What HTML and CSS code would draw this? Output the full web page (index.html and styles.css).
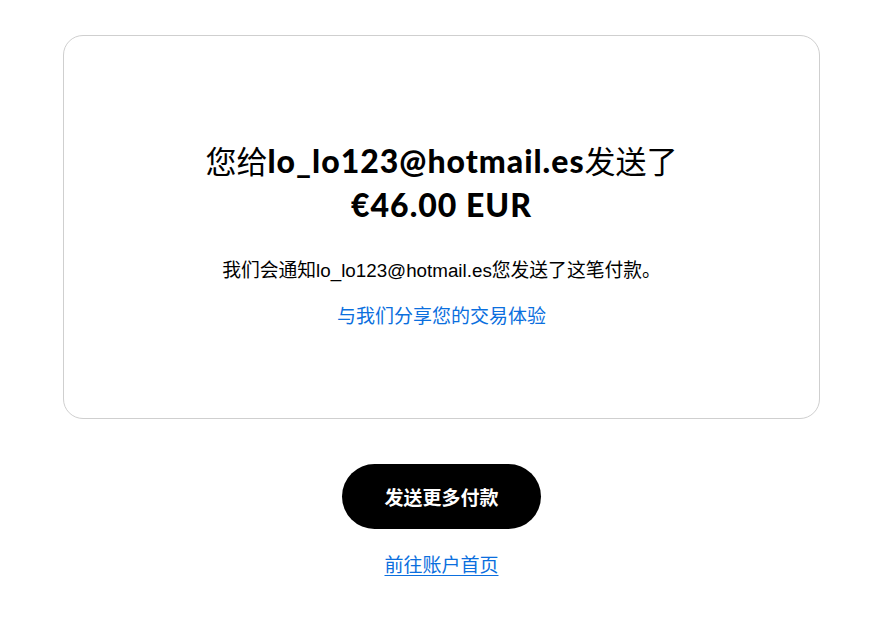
FILE: index.html
```html
<!DOCTYPE html>
<html lang="zh-CN">
<head>
<meta charset="utf-8">
<title>付款已发送</title>
<link rel="stylesheet" href="styles.css">
</head>
<body>
<main class="page">
  <section class="card">
    <h1 class="title">您给<b class="strong">lo_lo123@hotmail.es</b>发送了<br><b class="strong">€46.00 EUR</b></h1>
    <p class="note">我们会通知lo_lo123@hotmail.es您发送了这笔付款。</p>
    <a class="feedback" href="#">与我们分享您的交易体验</a>
  </section>
  <div class="actions">
    <button class="primary" type="button">发送更多付款</button>
    <a class="home" href="#">前往账户首页</a>
  </div>
</main>
</body>
</html>
```
FILE: styles.css
```css
html, body {
  margin: 0;
  padding: 0;
  background: #fff;
}
body {
  font-family: "Liberation Sans", "Noto Sans CJK SC", sans-serif;
  color: #000;
}
.page {
  padding: 35px 59px 0 63px;
}
.card {
  box-sizing: border-box;
  height: 384px;
  border: 1px solid #cfcfcf;
  border-radius: 20px;
  padding-top: 103px;
  display: flex;
  flex-direction: column;
  align-items: center;
  text-align: center;
}
.title {
  margin: 0;
  font-family: "Lato", "Noto Sans CJK SC", sans-serif;
  font-size: 31px;
  line-height: 43px;
  font-weight: 400;
}
.strong {
  font-size: 32px;
  font-weight: 900;
  letter-spacing: 1px;
}
.note {
  margin: 32px 0 0;
  font-size: 18.8px;
  line-height: 24px;
}
.feedback {
  margin-top: 22px;
  font-size: 19px;
  line-height: 24px;
  color: #0b6fde;
  text-decoration: none;
}
.actions {
  display: flex;
  flex-direction: column;
  align-items: center;
  padding-top: 45px;
}
.primary {
  width: 199px;
  height: 65px;
  border: 0;
  border-radius: 33px;
  background: #000;
  color: #fff;
  font-family: "Noto Sans CJK SC", sans-serif;
  font-size: 19px;
  font-weight: 700;
  cursor: pointer;
}
.home {
  margin-top: 25px;
  font-size: 19px;
  line-height: 24px;
  color: #0b6fde;
  text-decoration: underline;
  text-underline-offset: 3px;
}
```
